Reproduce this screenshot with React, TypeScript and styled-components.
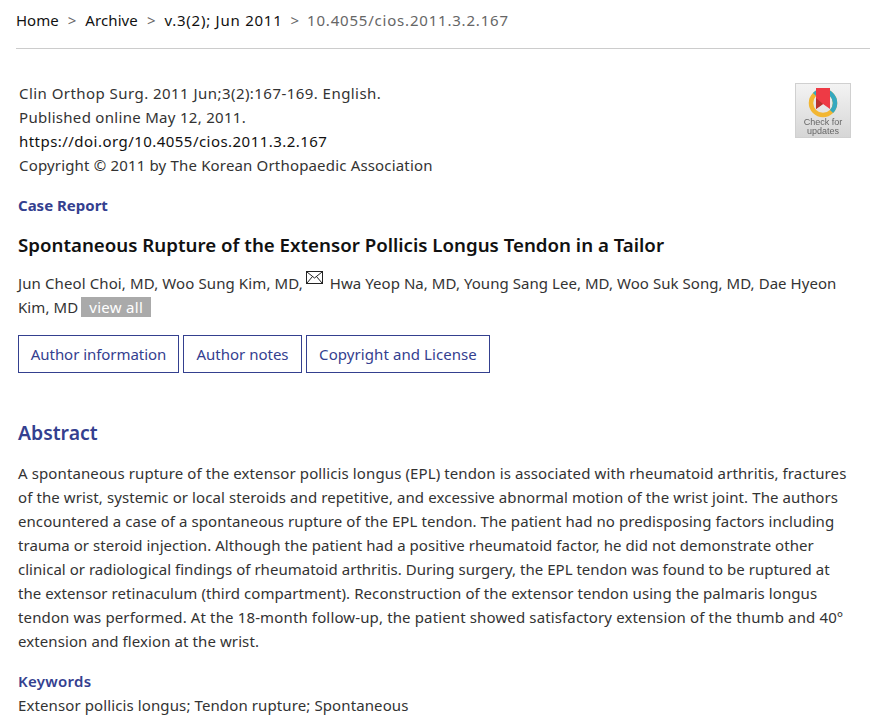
import React from "react";
import styled, { createGlobalStyle } from "styled-components";

const GlobalStyle = createGlobalStyle`
	html, body {
		margin: 0;
		padding: 0;
		background: #fff;
	}
	body {
		font-family: "Noto Sans", "Liberation Sans", sans-serif;
		font-size: 15px;
		line-height: 24px;
		color: #333;
		overflow: hidden;
	}
`;

const Page = styled.div`
	width: 870px;
	height: 727px;
	padding-left: 16px;
	box-sizing: border-box;
	overflow: hidden;
`;

const Breadcrumb = styled.nav`
	display: flex;
	align-items: center;
	height: 49px;
	padding-bottom: 8px;
	box-sizing: border-box;
	border-bottom: 1px solid #ccc;
`;

const Crumb = styled.span<{ $muted?: boolean; $track?: number }>`
	color: ${({ $muted }) => ($muted ? "#666" : "#111")};
	letter-spacing: ${({ $track }) => $track || 0}px;
`;

const Sep = styled.span<{ $tight?: boolean }>`
	margin: 0 ${({ $tight }) => ($tight ? 8 : 9)}px;
	color: #666;
`;

const Meta = styled.section`
	display: flex;
	justify-content: space-between;
	padding: 32px 19px 0 3px;
`;

const MetaLine = styled.div<{ $dark?: boolean; $track: number }>`
	color: ${({ $dark }) => ($dark ? "#111" : "#333")};
	letter-spacing: ${({ $track }) => $track}px;
`;

const Badge = styled.div`
	width: 56px;
	height: 55px;
	margin-top: 2px;
	display: flex;
	flex-direction: column;
	align-items: center;
	box-sizing: border-box;
	padding-top: 3px;
	background: linear-gradient(#f3f3f3, #d6d6d6);
	border: 1px solid #d0d0d0;
	filter: blur(0.3px);
`;

const BadgeText = styled.div`
	font-family: "Liberation Sans", sans-serif;
	font-size: 9px;
	line-height: 9px;
	color: #666;
	text-align: center;
	margin-top: -1px;
`;

const Content = styled.main`
	padding-left: 2px;
`;

const ArticleType = styled.div`
	margin-top: 16px;
	font-weight: 700;
	color: #34408f;
`;

const Title = styled.h1`
	margin: 16px 0 0;
	font-size: 18.7px;
	line-height: 24px;
	font-weight: 600;
	color: #111;
`;

const Authors = styled.div`
	margin-top: 14px;
`;

const AuthorRow = styled.div`
	display: flex;
	align-items: center;
	height: 24px;
	white-space: pre;
`;

const AuthorText = styled.span<{ $track: number }>`
	letter-spacing: ${({ $track }) => $track}px;
`;

const MailIcon = styled.svg`
	width: 17px;
	height: 13px;
	margin: 0 7px 0 3px;
	position: relative;
	top: -6px;
`;

const ViewAll = styled.span`
	display: block;
	height: 20px;
	line-height: 20px;
	padding: 0 8px;
	margin-left: 3px;
	background: #aaa;
	color: #fff;
	letter-spacing: 0.3px;
`;

const Tabs = styled.div`
	display: flex;
	gap: 4px;
	margin-top: 16px;
`;

const TabButton = styled.div<{ $width: number; $track?: number }>`
	width: ${({ $width }) => $width}px;
	height: 38px;
	display: flex;
	align-items: center;
	justify-content: center;
	box-sizing: border-box;
	border: 1px solid #34408f;
	color: #34408f;
	letter-spacing: ${({ $track }) => $track || 0}px;
`;

const SectionTitle = styled.h2`
	margin: 48px 0 0;
	font-size: 19.4px;
	line-height: 24px;
	font-weight: 600;
	color: #34408f;
`;

const Paragraph = styled.div`
	margin-top: 16px;
	white-space: nowrap;
`;

const ParagraphLine = styled.div<{ $track: number }>`
	letter-spacing: ${({ $track }) => $track}px;
`;

const KeywordsLabel = styled.div`
	margin-top: 16px;
	font-weight: 600;
	color: #34408f;
	letter-spacing: 0.3px;
`;

const KeywordsText = styled.div`
	letter-spacing: 0.11px;
`;

const abstractLines = [
	{ text: "A spontaneous rupture of the extensor pollicis longus (EPL) tendon is associated with rheumatoid arthritis, fractures", track: 0.11 },
	{ text: "of the wrist, systemic or local steroids and repetitive, and excessive abnormal motion of the wrist joint. The authors", track: 0.095 },
	{ text: "encountered a case of a spontaneous rupture of the EPL tendon. The patient had no predisposing factors including", track: 0.07 },
	{ text: "trauma or steroid injection. Although the patient had a positive rheumatoid factor, he did not demonstrate other", track: 0.05 },
	{ text: "clinical or radiological findings of rheumatoid arthritis. During surgery, the EPL tendon was found to be ruptured at", track: 0.02 },
	{ text: "the extensor retinaculum (third compartment). Reconstruction of the extensor tendon using the palmaris longus", track: 0.075 },
	{ text: "tendon was performed. At the 18-month follow-up, the patient showed satisfactory extension of the thumb and 40°", track: 0.135 },
	{ text: "extension and flexion at the wrist.", track: 0.09 },
];

function CheckBadge() {
	return (
		<Badge>
			<svg width="32" height="32" viewBox="0 0 32 32">
				<circle cx="16" cy="16" r="12" fill="none" stroke="#f2b632" strokeWidth="4.5" />
				<path d="M7.5 7.5A12 12 0 0 1 24.5 24.5" fill="none" stroke="#35a9c0" strokeWidth="4.5" />
				<path d="M9 1H23V22L16 17L9 22Z" fill="#ee3a45" />
				<path d="M9 11L16 17L9 22Z" fill="#b9322f" />
			</svg>
			<BadgeText>Check for<br />updates</BadgeText>
		</Badge>
	);
}

export default function App() {
	return (
		<React.Fragment>
			<GlobalStyle />
			<Page>
				<Breadcrumb>
					<Crumb>Home</Crumb>
					<Sep>&gt;</Sep>
					<Crumb $track={0.1}>Archive</Crumb>
					<Sep>&gt;</Sep>
					<Crumb $track={0.75}>v.3(2); Jun 2011</Crumb>
					<Sep $tight>&gt;</Sep>
					<Crumb $muted $track={0.8}>10.4055/cios.2011.3.2.167</Crumb>
				</Breadcrumb>
				<Meta>
					<div>
						<MetaLine $track={0.45}>Clin Orthop Surg. 2011 Jun;3(2):167-169. English.</MetaLine>
						<MetaLine $track={0.3}>Published online May 12, 2011.</MetaLine>
						<MetaLine $dark $track={0.46}>https://doi.org/10.4055/cios.2011.3.2.167</MetaLine>
						<MetaLine $track={0.17}>Copyright © 2011 by The Korean Orthopaedic Association</MetaLine>
					</div>
					<CheckBadge />
				</Meta>
				<Content>
					<ArticleType>Case Report</ArticleType>
					<Title>Spontaneous Rupture of the Extensor Pollicis Longus Tendon in a Tailor</Title>
					<Authors>
						<AuthorRow>
							<AuthorText $track={0.11}>Jun Cheol Choi, MD, Woo Sung Kim, MD,</AuthorText>
							<MailIcon viewBox="0 0 17 13">
								<rect x="0.5" y="0.5" width="16" height="12" fill="none" stroke="#222" />
								<path d="M1 1L8.5 7L16 1M1 12L6.5 5.5M16 12L10.5 5.5" fill="none" stroke="#222" />
							</MailIcon>
							<AuthorText $track={0.05}>Hwa Yeop Na, MD, Young Sang Lee, MD, Woo Suk Song, MD, Dae Hyeon</AuthorText>
						</AuthorRow>
						<AuthorRow>
							<AuthorText $track={0.08}>Kim, MD</AuthorText>
							<ViewAll>view all</ViewAll>
						</AuthorRow>
					</Authors>
					<Tabs>
						<TabButton $width={161} $track={-0.05}>Author information</TabButton>
						<TabButton $width={119}>Author notes</TabButton>
						<TabButton $width={184} $track={0.08}>Copyright and License</TabButton>
					</Tabs>
					<SectionTitle>Abstract</SectionTitle>
					<Paragraph>
						{abstractLines.map((line) => (
							<ParagraphLine key={line.text} $track={line.track}>{line.text}</ParagraphLine>
						))}
					</Paragraph>
					<KeywordsLabel>Keywords</KeywordsLabel>
					<KeywordsText>Extensor pollicis longus; Tendon rupture; Spontaneous</KeywordsText>
				</Content>
			</Page>
		</React.Fragment>
	);
}
